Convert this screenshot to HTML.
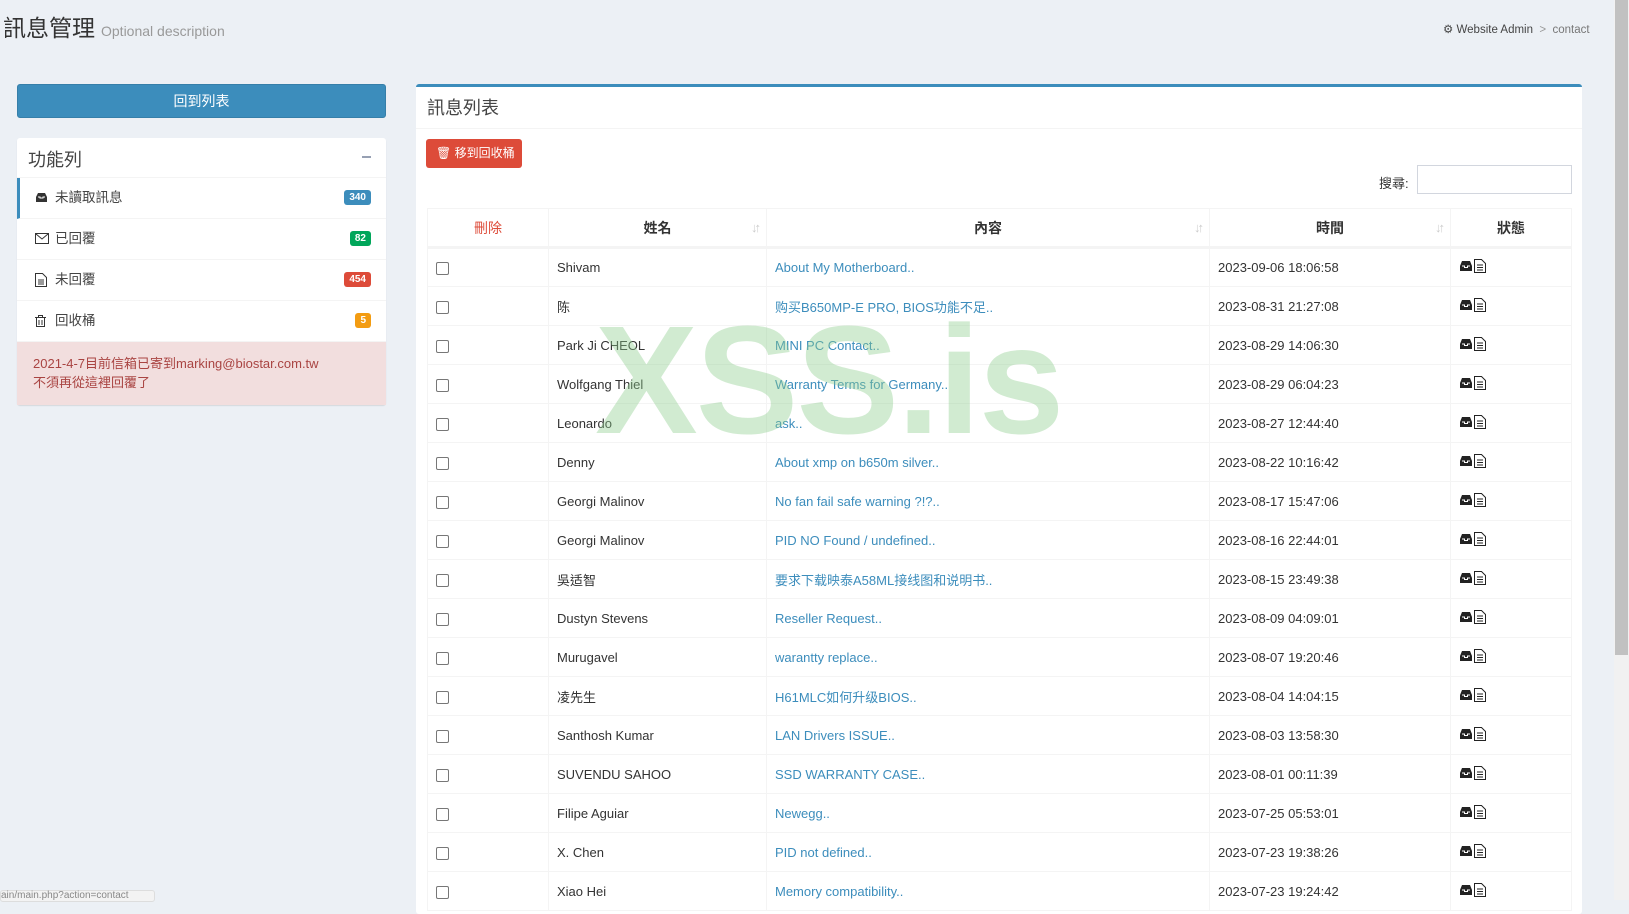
<!DOCTYPE html>
<html><head><meta charset="utf-8"><style>
*{box-sizing:border-box;margin:0;padding:0}
body{width:1629px;height:900px;overflow:hidden;background:#ecf0f5;font-family:"Liberation Sans","Noto Sans CJK TC",sans-serif;font-size:13px;color:#333;position:relative}
.h1{position:absolute;left:3px;top:9px;font-size:23px;color:#333}
.h1 small{font-size:14px;color:#999;margin-left:6px}
.bc{position:absolute;left:1443px;top:22px;font-size:11.5px;color:#444}
.bc span{color:#999}
.btn1{position:absolute;left:17px;top:84px;width:369px;height:34px;background:#3c8dbc;border:1px solid #367fa9;border-radius:3px;color:#fff;font-size:14px;text-align:center;line-height:32px}
.box{position:absolute;left:17px;top:138px;width:369px;background:#fff;border-radius:3px;box-shadow:0 1px 1px rgba(0,0,0,.1)}
.box .hd{height:40px;border-bottom:1px solid #f4f4f4;padding:8px 11px;font-size:18px;color:#444;position:relative}
.box .hd i{position:absolute;right:15px;top:18px;width:9px;height:2px;background:#97a0b3}
.it{height:41px;border-bottom:1px solid #f4f4f4;padding:0 0 0 38px;line-height:40px;font-size:13.5px;color:#444;position:relative}
.it.act{border-left:3px solid #3c8dbc;padding-left:35px}
.it svg{position:absolute;left:18px;top:14px}
.it.act svg{left:15px}
.bd{position:absolute;right:15px;top:12px;font-size:10px;font-weight:bold;color:#fff;border-radius:3px;padding:0 5px;line-height:15px}
.note{background:#f2dede;color:#a94442;padding:12px 16px;font-size:13px;line-height:19px;height:63px}
.panel{position:absolute;left:416px;top:84px;width:1166px;height:830px;background:#fff;border-top:3px solid #3c8dbc;border-radius:3px}
.panel .t{height:42px;border-bottom:1px solid #f4f4f4;font-size:18px;padding:7px 11px;color:#444}
.del{position:absolute;left:10px;top:52px;height:29px;width:96px;background:#dd4b39;border-radius:3px;color:#fff;font-size:12px;line-height:29px;padding-left:10px}
.srch{position:absolute;left:963px;top:86px;font-size:13px}
.srch input{position:absolute;left:38px;top:-8px;width:155px;height:29px;border:1px solid #d2d6de}
table{position:absolute;left:11px;top:121px;width:1145px;border-collapse:collapse;font-size:13px}
th,td{border:1px solid #f4f4f4;height:39px;padding:0 8px}
th{font-weight:bold;text-align:center;border-bottom:3px solid #f4f4f4;height:39px;position:relative;color:#333;font-size:14px}
th .s{position:absolute;right:8px;top:11px;color:#ccc;font-size:13px;letter-spacing:-3px}
td a{color:#3c8dbc}
.cb{width:13px;height:13px;border:1px solid #777;border-radius:2px;display:inline-block;vertical-align:middle}
.wm{position:absolute;left:595px;top:292px;font-size:154px;font-weight:bold;color:rgba(140,205,140,.4);letter-spacing:-2px;font-family:"Liberation Sans",sans-serif;pointer-events:none}
.sb{position:absolute;left:1614px;top:0;width:15px;height:900px;background:#f1f1f1}
.sb i{position:absolute;left:1px;top:0;width:13px;height:655px;background:#c1c1c1}
.status{position:absolute;left:0;top:890px;width:155px;height:12px;border:1px solid #ddd;border-radius:3px;background:#f3f3f3;font-size:10px;color:#888;line-height:10px}
</style></head><body>
<svg width="0" height="0" style="position:absolute"><defs><symbol id="st" viewBox="0 0 28 14"><path d="M1 7 L3 2 H11 L13 7 V12 H1Z" fill="#222"/><path d="M3 7h2.5v1.5h3V7H11" stroke="#fff" fill="none"/><path d="M15.5 .5h7l4 4v9h-11z" fill="#fff" stroke="#222"/><path d="M18 6h6M18 8.5h6M18 11h6" stroke="#222"/></symbol></defs></svg>
<div class="h1">訊息管理<small>Optional description</small></div>
<div class="bc">⚙ Website Admin <span>&nbsp;&gt;&nbsp;</span> <span style="color:#777">contact</span></div>
<div class="btn1">回到列表</div>
<div class="box">
<div class="hd">功能列<i></i></div>
<div class="it act"><svg width="13" height="11"><path d="M1 5 L3 1 H10 L12 5 V10 H1Z" fill="#333"/><path d="M3 5h2v1h3v-1h2" stroke="#fff" fill="none"/></svg>未讀取訊息<span class="bd" style="background:#3c8dbc">340</span></div>
<div class="it"><svg width="14" height="11"><rect x=".5" y=".5" width="13" height="10" fill="none" stroke="#333"/><path d="M1 1l6 5 6-5" fill="none" stroke="#333"/></svg>已回覆<span class="bd" style="background:#00a65a">82</span></div>
<div class="it"><svg width="12" height="14" style="top:13px"><path d="M.5 .5h7l4 4v9h-11z" fill="none" stroke="#333"/><path d="M3 7h6M3 9h6M3 11h6" stroke="#333"/></svg>未回覆<span class="bd" style="background:#dd4b39">454</span></div>
<div class="it"><svg width="11" height="12" style="top:14px"><path d="M0 2.5h11M3.5 2V.5h4V2M1.5 3v8.5h8V3M4 5v5M7 5v5" fill="none" stroke="#333"/></svg>回收桶<span class="bd" style="background:#f39c12">5</span></div>
<div class="note">2021-4-7目前信箱已寄到marking@biostar.com.tw<br>不須再從這裡回覆了</div>
</div>
<div class="panel">
<div class="t">訊息列表</div>
<div class="del">🗑 移到回收桶</div>
<div class="srch">搜尋:<input></div>
<table>
<tr><th style="width:121px;color:#dd4b39;font-weight:normal">刪除</th><th style="width:218px">姓名<span class="s">↓↑</span></th><th style="width:443px">內容<span class="s">↓↑</span></th><th style="width:241px">時間<span class="s">↓↑</span></th><th>狀態</th></tr>
<tr><td><span class="cb"></span></td><td>Shivam</td><td><a>About My Motherboard..</a></td><td>2023-09-06 18:06:58</td><td><svg width="28" height="14"><use href="#st"/></svg></td></tr>
<tr><td><span class="cb"></span></td><td>陈</td><td><a>购买B650MP-E PRO, BIOS功能不足..</a></td><td>2023-08-31 21:27:08</td><td><svg width="28" height="14"><use href="#st"/></svg></td></tr>
<tr><td><span class="cb"></span></td><td>Park Ji CHEOL</td><td><a>MINI PC Contact..</a></td><td>2023-08-29 14:06:30</td><td><svg width="28" height="14"><use href="#st"/></svg></td></tr>
<tr><td><span class="cb"></span></td><td>Wolfgang Thiel</td><td><a>Warranty Terms for Germany..</a></td><td>2023-08-29 06:04:23</td><td><svg width="28" height="14"><use href="#st"/></svg></td></tr>
<tr><td><span class="cb"></span></td><td>Leonardo</td><td><a>ask..</a></td><td>2023-08-27 12:44:40</td><td><svg width="28" height="14"><use href="#st"/></svg></td></tr>
<tr><td><span class="cb"></span></td><td>Denny</td><td><a>About xmp on b650m silver..</a></td><td>2023-08-22 10:16:42</td><td><svg width="28" height="14"><use href="#st"/></svg></td></tr>
<tr><td><span class="cb"></span></td><td>Georgi Malinov</td><td><a>No fan fail safe warning ?!?..</a></td><td>2023-08-17 15:47:06</td><td><svg width="28" height="14"><use href="#st"/></svg></td></tr>
<tr><td><span class="cb"></span></td><td>Georgi Malinov</td><td><a>PID NO Found / undefined..</a></td><td>2023-08-16 22:44:01</td><td><svg width="28" height="14"><use href="#st"/></svg></td></tr>
<tr><td><span class="cb"></span></td><td>吳适智</td><td><a>要求下载映泰A58ML接线图和说明书..</a></td><td>2023-08-15 23:49:38</td><td><svg width="28" height="14"><use href="#st"/></svg></td></tr>
<tr><td><span class="cb"></span></td><td>Dustyn Stevens</td><td><a>Reseller Request..</a></td><td>2023-08-09 04:09:01</td><td><svg width="28" height="14"><use href="#st"/></svg></td></tr>
<tr><td><span class="cb"></span></td><td>Murugavel</td><td><a>warantty replace..</a></td><td>2023-08-07 19:20:46</td><td><svg width="28" height="14"><use href="#st"/></svg></td></tr>
<tr><td><span class="cb"></span></td><td>凌先生</td><td><a>H61MLC如何升级BIOS..</a></td><td>2023-08-04 14:04:15</td><td><svg width="28" height="14"><use href="#st"/></svg></td></tr>
<tr><td><span class="cb"></span></td><td>Santhosh Kumar</td><td><a>LAN Drivers ISSUE..</a></td><td>2023-08-03 13:58:30</td><td><svg width="28" height="14"><use href="#st"/></svg></td></tr>
<tr><td><span class="cb"></span></td><td>SUVENDU SAHOO</td><td><a>SSD WARRANTY CASE..</a></td><td>2023-08-01 00:11:39</td><td><svg width="28" height="14"><use href="#st"/></svg></td></tr>
<tr><td><span class="cb"></span></td><td>Filipe Aguiar</td><td><a>Newegg..</a></td><td>2023-07-25 05:53:01</td><td><svg width="28" height="14"><use href="#st"/></svg></td></tr>
<tr><td><span class="cb"></span></td><td>X. Chen</td><td><a>PID not defined..</a></td><td>2023-07-23 19:38:26</td><td><svg width="28" height="14"><use href="#st"/></svg></td></tr>
<tr><td><span class="cb"></span></td><td>Xiao Hei</td><td><a>Memory compatibility..</a></td><td>2023-07-23 19:24:42</td><td><svg width="28" height="14"><use href="#st"/></svg></td></tr>
</table>
</div>
<div class="wm">XSS.is</div>
<div class="sb"><i></i></div>
<div class="status">ain/main.php?action=contact</div>
</body></html>
